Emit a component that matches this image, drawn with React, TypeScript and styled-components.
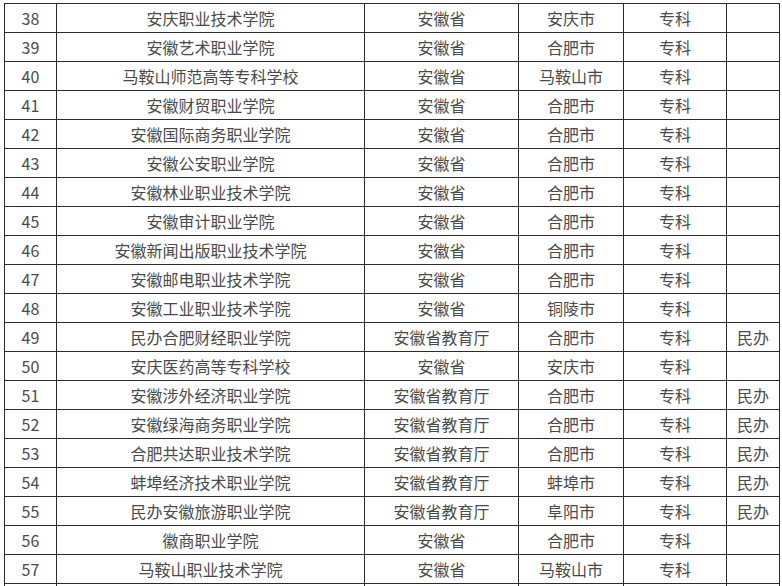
import React from "react";
import styled, { createGlobalStyle } from "styled-components";

const Global = createGlobalStyle`
  html, body { margin: 0; padding: 0; background: #fff; }
  *, *::before, *::after { box-sizing: border-box; }
  body { font-family: "Noto Sans CJK SC", "Noto Sans", sans-serif; overflow: hidden; }
`;

const Page = styled.div`
  padding: 3px 0 0 4px;
  height: 586px;
  overflow: hidden;
`;

const Grid = styled.div`
  display: grid;
  grid-template-columns: 52px 308px 154px 105px 103px 53px;
  grid-auto-rows: 29px;
  border-left: 1px solid #2b2b2b;
  border-top: 1px solid #2b2b2b;
  width: max-content;
`;

const Cell = styled.div`
  border-right: 1px solid #2b2b2b;
  border-bottom: 1px solid #2b2b2b;
  display: flex;
  align-items: center;
  justify-content: center;
  font-size: 16px;
  line-height: 1;
  color: #4a4a4a;
  white-space: nowrap;
  overflow: hidden;
  padding-bottom: 1px;
`;

type Row = [string, string, string, string, string, string];

const rows: Row[] = [
  ["38", "安庆职业技术学院", "安徽省", "安庆市", "专科", ""],
  ["39", "安徽艺术职业学院", "安徽省", "合肥市", "专科", ""],
  ["40", "马鞍山师范高等专科学校", "安徽省", "马鞍山市", "专科", ""],
  ["41", "安徽财贸职业学院", "安徽省", "合肥市", "专科", ""],
  ["42", "安徽国际商务职业学院", "安徽省", "合肥市", "专科", ""],
  ["43", "安徽公安职业学院", "安徽省", "合肥市", "专科", ""],
  ["44", "安徽林业职业技术学院", "安徽省", "合肥市", "专科", ""],
  ["45", "安徽审计职业学院", "安徽省", "合肥市", "专科", ""],
  ["46", "安徽新闻出版职业技术学院", "安徽省", "合肥市", "专科", ""],
  ["47", "安徽邮电职业技术学院", "安徽省", "合肥市", "专科", ""],
  ["48", "安徽工业职业技术学院", "安徽省", "铜陵市", "专科", ""],
  ["49", "民办合肥财经职业学院", "安徽省教育厅", "合肥市", "专科", "民办"],
  ["50", "安庆医药高等专科学校", "安徽省", "安庆市", "专科", ""],
  ["51", "安徽涉外经济职业学院", "安徽省教育厅", "合肥市", "专科", "民办"],
  ["52", "安徽绿海商务职业学院", "安徽省教育厅", "合肥市", "专科", "民办"],
  ["53", "合肥共达职业技术学院", "安徽省教育厅", "合肥市", "专科", "民办"],
  ["54", "蚌埠经济技术职业学院", "安徽省教育厅", "蚌埠市", "专科", "民办"],
  ["55", "民办安徽旅游职业学院", "安徽省教育厅", "阜阳市", "专科", "民办"],
  ["56", "徽商职业学院", "安徽省", "合肥市", "专科", ""],
  ["57", "马鞍山职业技术学院", "安徽省", "马鞍山市", "专科", ""],
  ["", "", "", "", "", ""],
];

export default function App() {
  return (
    <>
      <Global />
      <Page>
        <Grid>
          {rows.map((r, i) =>
            r.map((c, j) => <Cell key={`${i}-${j}`}>{c}</Cell>)
          )}
        </Grid>
      </Page>
    </>
  );
}
